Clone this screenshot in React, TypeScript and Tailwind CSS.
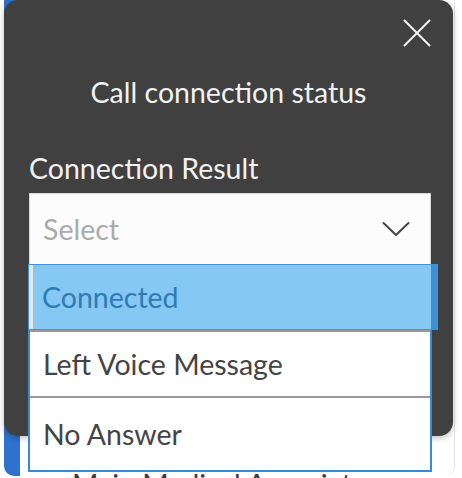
import type { ReactElement } from 'react';

const FONT = { fontFamily: 'Lato, "Open Sans", sans-serif' };

function CloseIcon(): ReactElement {
  return (
    <svg width="28" height="28" viewBox="0 0 28 28" fill="none" stroke="#f2f2f2" strokeWidth="2" strokeLinecap="round">
      <path d="M1.5 1.5 L26.5 26.5 M26.5 1.5 L1.5 26.5" />
    </svg>
  );
}

function Chevron(): ReactElement {
  return (
    <svg width="28" height="16" viewBox="0 0 28 16" fill="none" stroke="#444" strokeWidth="2" strokeLinecap="round" strokeLinejoin="round">
      <path d="M1.5 2 L14 14 L26.5 2" />
    </svg>
  );
}

export default function App(): ReactElement {
  return (
    <div className="relative h-[478px] w-[462px] overflow-hidden bg-white" style={FONT}>
      {/* card behind the modal */}
      <div className="absolute left-[4px] top-[-20px] flex h-[496px] w-[451px] flex-col justify-end rounded-[10px] border-l-[16px] border-r border-l-[#2f72cd] border-r-[#e4e4e4] bg-white pl-[52px]">
        <div className="mb-[-26px] text-[28.5px] leading-[36px] text-[#3a3a3a]">Main Medical Associates</div>
      </div>

      {/* modal */}
      <div className="absolute left-[4px] top-0 flex h-[436px] w-[449px] flex-col rounded-[14px] bg-[#404040] shadow-[0_2px_6px_rgba(0,0,0,0.25)]">
        <div className="flex justify-end pr-[22px] pt-[19px]">
          <button type="button">
            <CloseIcon />
          </button>
        </div>
        <div className="mt-[27px] text-center text-[28.5px] leading-[36px] text-[#f2f2f2]">Call connection status</div>
        <div className="mt-[40px] pl-[25px] text-[28.5px] leading-[36px] text-[#f2f2f2]">Connection Result</div>
        <div className="ml-[25px] mt-[7px] flex h-[72px] w-[402px] items-center justify-between border border-[#d6d6d6] bg-[#fcfcfc] pl-[13px] pr-[20px]">
          <span className="text-[28.5px] text-[#ababab]">Select</span>
          <Chevron />
        </div>
      </div>

      {/* open dropdown */}
      <div className="absolute left-[28px] top-[264px] w-[404px] text-[28.5px]">
        <div className="relative z-10 flex h-[66px] w-[410px] border border-[#3c93e2]">
          <div className="w-[4px] bg-[#e6e6e6]" />
          <div className="flex flex-1 items-center bg-[#85c8f3] pl-[9px] text-[#2f7bb5]">Connected</div>
          <div className="w-[6px] bg-[#3e8fd3]" />
        </div>
        <div className="border-x-2 border-b-2 border-x-[#3b87d9] border-b-[#3b87d9] bg-white text-[#444]">
          <div className="flex h-[66px] items-center border-t-2 border-[#9a9a9a] pl-[13px]">Left Voice Message</div>
          <div className="flex h-[74px] items-center border-t-2 border-[#9a9a9a] pl-[13px]">No Answer</div>
        </div>
      </div>
    </div>
  );
}
